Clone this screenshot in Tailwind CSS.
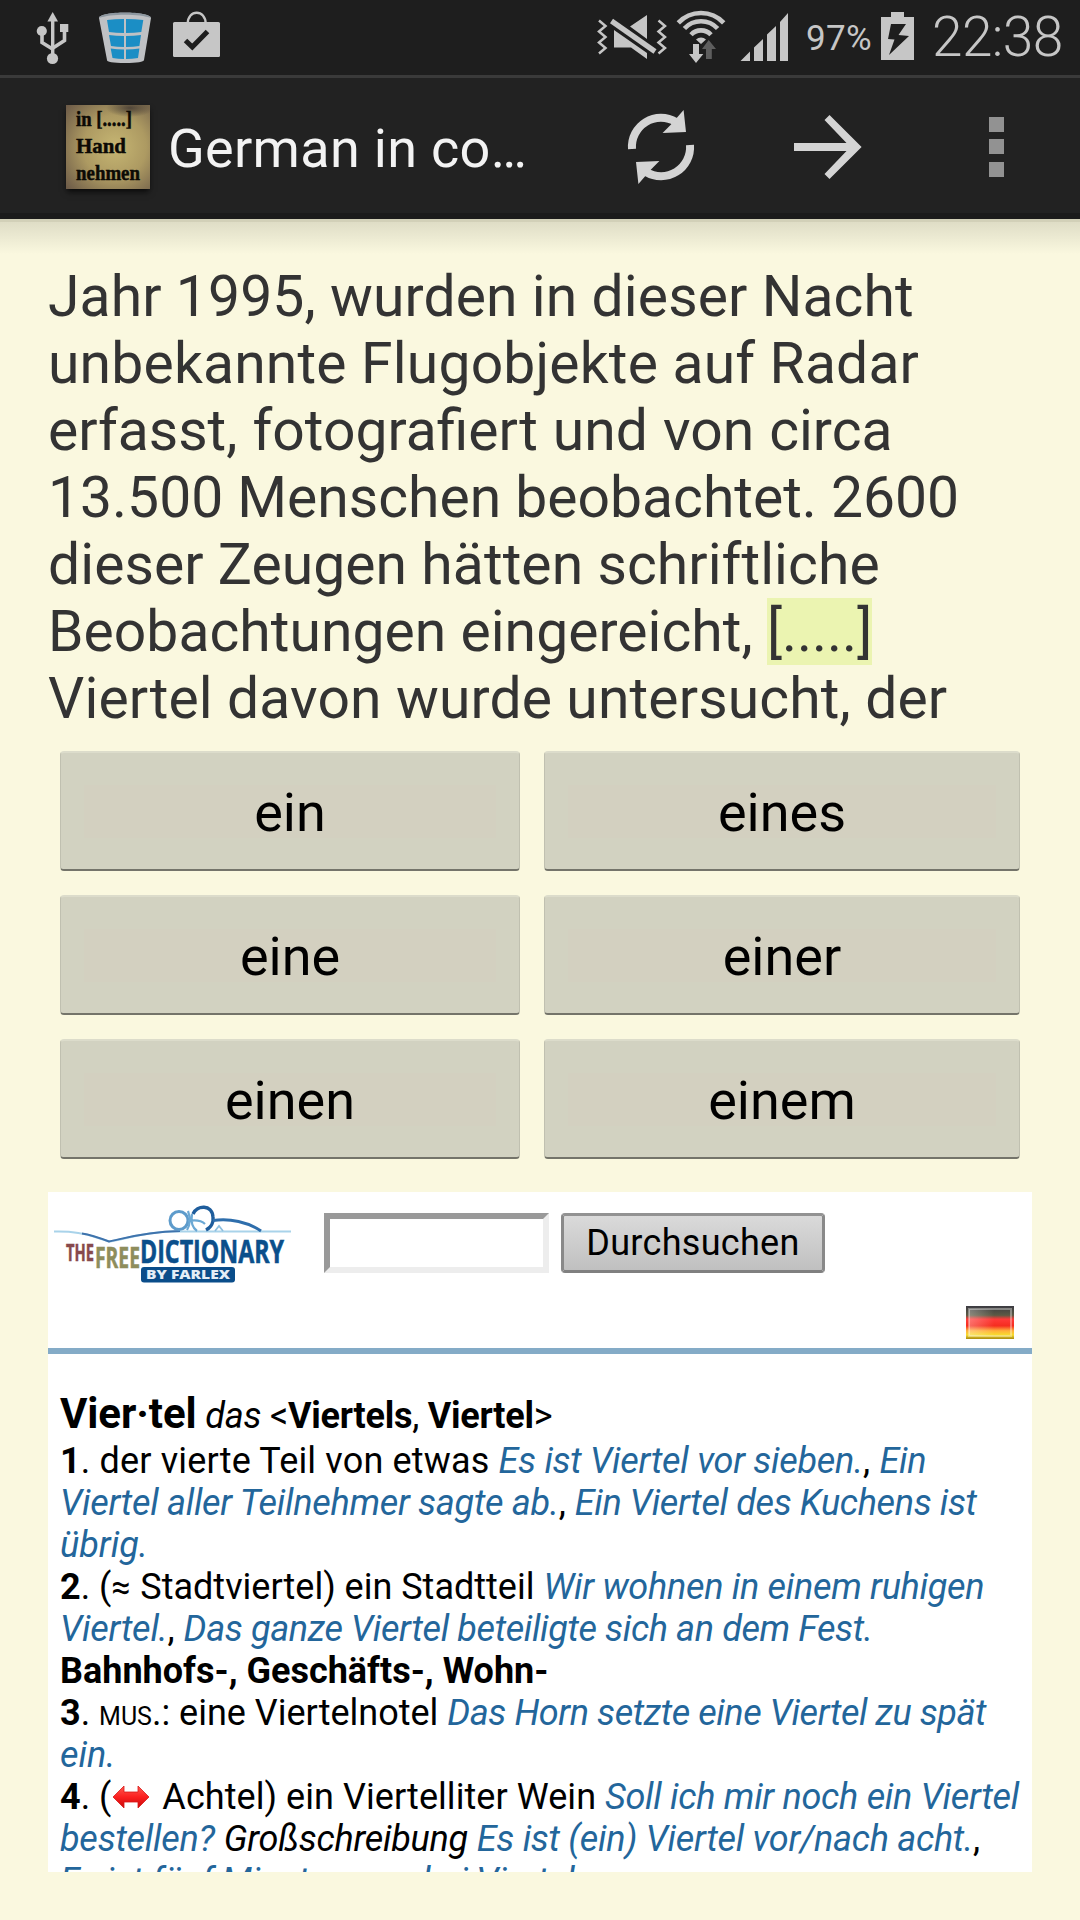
<!DOCTYPE html>
<html lang="de">
<head>
<meta charset="utf-8">
<title>German in context</title>
<script src="https://cdn.jsdelivr.net/npm/@tailwindcss/browser@4"></script>
</head>
<body class="bg-[#faf8df]">
<div class="flex h-[1920px] w-[1080px] flex-col overflow-hidden bg-[#faf8df] font-[Roboto,sans-serif]">

  <!-- Status bar -->
  <div class="flex h-[78px] shrink-0 border-b-3 border-[#3a3a3a] bg-[#1e1e1e] pl-[35px] text-[#c6c6c6]">
    <svg class="h-[75px] w-[37px]" viewBox="35 0 37 75" fill="#c6c6c6">
      <path d="M52.7 12 58 21.5H47.4z"/><path d="M51 20h3.4v36H51z"/><circle cx="52.5" cy="58.5" r="5.6"/><circle cx="41.8" cy="31" r="5.1"/><path d="M60 24h8.3v8H60z"/>
      <path d="M42 34v8.500l10.500 6.500M64.500 31v9.500L53 48" fill="none" stroke="#c6c6c6" stroke-width="3.600"/>
    </svg>
    <svg class="ml-[26px] h-[75px] w-[54px]" viewBox="98 0 54 75">
      <path d="M99 18C99 11 151 11 151 18L144 60Q143.500 63 125 63T107 60z" fill="#bfc1c4"/>
      <path d="M99 18C99 10.500 151 10.500 151 18 140 13.500 110 13.500 99 18z" fill="#8d979f"/>
      <path d="M107 20q8-1 17-1v14q-8 0-15-1zM126 19q9 0 17.300 1l-2 12q-7 1-15.300 1zM109 35q7 1 15 1v11q-7 0-13-1zM126 36q8 0 15-1l-1.600 11q-6 1-13.400 1zM110.700 48.500q6 1 13.300 1V59q-6 0-11.500-1zM126 49.500q7 0 13.400-1L138 58q-6 1-12 1z" fill="#1b8ec5"/>
    </svg>
    <svg class="ml-[20px] h-[75px] w-[50px]" viewBox="172 0 50 75">
      <path d="M187.700 24c0-15 18-15 18 0" fill="none" stroke="#c6c6c6" stroke-width="2.400"/>
      <rect x="173" y="22" width="47" height="35" rx="1.500" fill="#c6c6c6"/>
      <path d="M185.500 40.500 192.300 47 207.500 31.500" fill="none" stroke="#1e1e1e" stroke-width="5"/>
    </svg>
    <svg class="ml-[374px] h-[75px] w-[74px]" viewBox="596 0 74 75" fill="#c6c6c6">
      <path d="M599 20.500 605.500 26 599 31.500 605.500 37 599 42.500 605.500 48 599 53.500M658.500 20.500 665 26 658.500 31.500 665 37 658.500 42.500 665 48 658.500 53.500" fill="none" stroke="#c6c6c6" stroke-width="2.500"/>
      <path d="M630 26.500 647 15V39zM614 30V47.500H631L647 59V53z"/>
      <path d="M611.500 21 655 51.500" stroke="#c6c6c6" stroke-width="5.200"/>
    </svg>
    <svg class="ml-[5px] h-[75px] w-[53px]" viewBox="675 0 53 75" fill="#c6c6c6">
      <path d="M678.300 22.900a31 31 0 0 1 45.400 0M684.400 28.500a22.700 22.700 0 0 1 33.200 0M691 34.700a13.700 13.700 0 0 1 20 0" fill="none" stroke="#c6c6c6" stroke-width="4.600"/>
      <path d="M696 39.500a7.500 7.500 0 0 1 10 0L701 44zM693 44h6v10h4.300L696 63l-7-9h4z"/>
      <path d="M708.700 40 716 49h-4.200v10H706V49h-4z" fill="#5e5e5e"/>
    </svg>
    <svg class="ml-[11px] h-[75px] w-[51px]" viewBox="739 0 51 75" fill="#c6c6c6">
      <path d="M740.500 61 750 51.500V61zM754 61V47.500L763 39V61zM767 61V34.500L776 26V61zM780 61V22L788 13V61z"/>
    </svg>
    <span class="ml-[16px] w-[68px] text-[35px] leading-[77px] tracking-[0.3px]">97%</span>
    <svg class="ml-[5px] h-[75px] w-[36px]" viewBox="879 0 36 75" fill="#c6c6c6">
      <path d="M881 17h10v-5h13v5h10v43H881z"/>
      <path d="M891 24h15l-7.500 11 10.500 1-20 19 5.500-15.500L888 39z" fill="#1e1e1e"/>
    </svg>
    <span class="ml-[17px] text-[55px] font-light leading-[75px] tracking-[-0.6px]">22:38</span>
  </div>

  <!-- Action bar -->
  <div class="flex h-[141px] shrink-0 border-b-6 border-[#1b1b1b] bg-[#222] pl-[66px] text-[#f3f3f3]">
    <svg class="mt-[27px] h-[84px] w-[84px] shadow-md shadow-black/60" viewBox="66 105 84 84">
      <defs>
        <radialGradient id="parch" cx=".58" cy=".5" r=".75"><stop offset="0" stop-color="#c6b673"/><stop offset=".5" stop-color="#ad9a62"/><stop offset="1" stop-color="#6d5b48"/></radialGradient>
        <radialGradient id="stain"><stop offset="0" stop-color="#3e3530" stop-opacity=".8"/><stop offset="1" stop-color="#3e3530" stop-opacity="0"/></radialGradient>
      </defs>
      <rect x="66" y="105" width="84" height="84" fill="url(#parch)"/>
      <ellipse cx="130" cy="108" rx="24" ry="9" fill="url(#stain)"/>
      <g font-family="Liberation Serif, serif" font-weight="700" fill="#0c0a05" stroke="#0c0a05" stroke-width=".5" font-size="22">
        <text x="76" y="126" textLength="56" lengthAdjust="spacingAndGlyphs">in [.....]</text>
        <text x="76" y="153" textLength="50" lengthAdjust="spacingAndGlyphs">Hand</text>
        <text x="76" y="179.500" textLength="64" lengthAdjust="spacingAndGlyphs">nehmen</text>
      </g>
    </svg>
    <h1 class="ml-[18px] w-[370px] text-[54px] leading-[142px] tracking-[0.3px] whitespace-nowrap">German in co…</h1>
    <svg class="ml-[84px] h-[135px] w-[78px]" viewBox="622 78 78 135">
      <g id="half"><path d="M632 149A29 29 0 0 1 676 122" fill="none" stroke="#d4d4d4" stroke-width="8"/><path d="M683.600 110 686 132 662.600 133 671 124.500z" fill="#d4d4d4"/></g>
      <use href="#half" transform="rotate(180 661 147)"/>
    </svg>
    <svg class="ml-[90px] h-[135px] w-[76px]" viewBox="790 78 76 135">
      <path d="M829.500 115 861.600 147 829.500 179 824.500 174 846.500 151H794V143H846.500L824.500 120z" fill="#d4d4d4"/>
    </svg>
    <svg class="ml-[114px] h-[135px] w-[35px]" viewBox="980 78 35 135" fill="#929292">
      <path d="M989 117h15v15h-15zM989 139h15v15h-15zM989 162h15v15h-15z"/>
    </svg>
  </div>
  <div class="h-[3px] shrink-0 bg-[#d2d0b8]"></div>
  <div class="h-[32px] shrink-0 bg-linear-to-b from-[#dfddc6] to-[#faf8df]"></div>

  <!-- Sentence -->
  <p class="mt-[9px] h-[469px] shrink-0 pl-[48px] text-[57px] leading-[67px] whitespace-nowrap text-[#333]"><span class="tracking-[0.11px]">Jahr 1995, wurden in dieser Nacht</span><br><span class="tracking-[0.19px]">unbekannte Flugobjekte auf Radar</span><br><span class="[word-spacing:0.9px]">erfasst, fotografiert und von circa</span><br>13.500 Menschen beobachtet. 2600<br><span class="tracking-[0.07px]">dieser Zeugen hätten schriftliche</span><br><span class="tracking-[0.04px]">Beobachtungen eingereicht, </span><span class="bg-[#ebf4b1]">[.....]</span><br><span class="tracking-[0.14px]">Viertel davon wurde untersucht, der</span></p>

  <!-- Answers -->
  <div class="mx-[60px] mt-[19px] grid shrink-0 grid-cols-[460px_476px] gap-6 text-[54px] leading-[60px] text-black">
    <button class="h-[120px] rounded-[4px] border-x border-t-2 border-b-2 border-x-[#c0c0b0] border-t-[#dcdccb] border-b-[#74746a] bg-[#d2d2c1] px-[23px]"><span class="flex h-[53px] items-center justify-center bg-[#d3d0c0] pt-[4px]">ein</span></button>
    <button class="h-[120px] rounded-[4px] border-x border-t-2 border-b-2 border-x-[#c0c0b0] border-t-[#dcdccb] border-b-[#74746a] bg-[#d2d2c1] px-[23px]"><span class="flex h-[53px] items-center justify-center bg-[#d3d0c0] pt-[4px]">eines</span></button>
    <button class="h-[120px] rounded-[4px] border-x border-t-2 border-b-2 border-x-[#c0c0b0] border-t-[#dcdccb] border-b-[#74746a] bg-[#d2d2c1] px-[23px]"><span class="flex h-[53px] items-center justify-center bg-[#d3d0c0] pt-[4px]">eine</span></button>
    <button class="h-[120px] rounded-[4px] border-x border-t-2 border-b-2 border-x-[#c0c0b0] border-t-[#dcdccb] border-b-[#74746a] bg-[#d2d2c1] px-[23px]"><span class="flex h-[53px] items-center justify-center bg-[#d3d0c0] pt-[4px]">einer</span></button>
    <button class="h-[120px] rounded-[4px] border-x border-t-2 border-b-2 border-x-[#c0c0b0] border-t-[#dcdccb] border-b-[#74746a] bg-[#d2d2c1] px-[23px]"><span class="flex h-[53px] items-center justify-center bg-[#d3d0c0] pt-[4px]">einen</span></button>
    <button class="h-[120px] rounded-[4px] border-x border-t-2 border-b-2 border-x-[#c0c0b0] border-t-[#dcdccb] border-b-[#74746a] bg-[#d2d2c1] px-[23px]"><span class="flex h-[53px] items-center justify-center bg-[#d3d0c0] pt-[4px]">einem</span></button>
  </div>

  <!-- Dictionary -->
  <div class="mx-[48px] mt-[33px] h-[680px] shrink-0 overflow-hidden bg-white text-[36px] leading-[42px] text-black">
    <div class="flex h-[162px] border-b-6 border-[#84abc7]">
      <svg class="ml-[4px] h-[100px] w-[242px]" viewBox="52 1192 242 100">
        <g fill="none">
          <path d="M54 1231.500C72 1231 84 1233 95 1237L109 1241.500C122 1240 142 1232 172 1231.500H291" stroke="#a9d3ea" stroke-width="2"/>
          <path d="M82 1233.500Q92 1235 109 1241.500C122 1239 142 1232 180 1231" stroke="#3f73ac" stroke-width="2"/>
          <circle cx="179" cy="1220.500" r="9" stroke="#5d9bcb" stroke-width="3"/>
          <path d="M193 1214C197 1205 212 1204 213 1217 214 1225 208 1229 206 1230" stroke="#1e5d9c" stroke-width="3.400"/>
          <path d="M188 1211Q192 1222 187 1230M188 1221Q200 1219 205 1224M192 1214Q190 1226 197 1231" stroke="#6ba8d4" stroke-width="2.200"/>
          <path d="M213 1220.500C230 1218 248 1222 261 1231" stroke="#2e6eac" stroke-width="3"/>
          <path d="M215 1231 219 1226 223 1231" stroke="#8dbfe0" stroke-width="1.800"/>
        </g>
        <g font-family="Open Sans, sans-serif" font-weight="700">
          <text x="66" y="1261" font-size="24" fill="#87494c" stroke="#87494c" stroke-width=".5" textLength="28" lengthAdjust="spacingAndGlyphs">THE</text>
          <text x="95" y="1268" font-size="28" fill="#8e8d5c" stroke="#8e8d5c" stroke-width=".5" textLength="45" lengthAdjust="spacingAndGlyphs">FREE</text>
          <text x="140" y="1262.700" font-size="33" fill="#0b4f8b" stroke="#0b4f8b" stroke-width=".6" textLength="144" lengthAdjust="spacingAndGlyphs">DICTIONARY</text>
          <rect x="141" y="1267" width="94" height="15.500" rx="3" fill="#0a4d8a"/>
          <text x="146" y="1279.300" font-size="12.500" font-weight="800" fill="#e4eef6" textLength="84" lengthAdjust="spacingAndGlyphs">BY FARLEX</text>
        </g>
      </svg>
      <div class="mt-[21px] ml-[30px] h-[60px] w-[225px] border-6 border-t-[#999] border-r-[#ededed] border-b-[#ededed] border-l-[#999] bg-white"></div>
      <button class="mt-[21px] ml-[12px] h-[60px] w-[264px] rounded-[4px] border-3 border-t-[#929292] border-x-[#898989] border-b-[#808080] bg-linear-to-b from-[#dadada] to-[#c0c0c0] tracking-[0.3px]">Durchsuchen</button>
      <svg class="mt-[114px] ml-[141px] h-[33px] w-[48px]" viewBox="0 0 48 33">
        <defs><linearGradient id="flag" x2="0" y2="1"><stop offset="0" stop-color="#3c3b42"/><stop offset=".28" stop-color="#5c5a44"/><stop offset=".4" stop-color="#ff3a38"/><stop offset=".6" stop-color="#f52d20"/><stop offset=".75" stop-color="#ffb03a"/><stop offset=".88" stop-color="#f8dc2c"/><stop offset="1" stop-color="#a98a10"/></linearGradient>
        <linearGradient id="shine"><stop offset="0" stop-color="#fff" stop-opacity=".3"/><stop offset=".6" stop-color="#fff" stop-opacity="0"/></linearGradient></defs>
        <path d="M0 0h48v33H0z" fill="url(#flag)"/>
        <path d="M3 3h42v27H3z" fill="url(#shine)" stroke="#fff" stroke-opacity=".35" stroke-width="2"/>
      </svg>
    </div>
    <div class="pt-[35px] pl-[12px] whitespace-nowrap">
      <div class="h-[51px] leading-[49px] tracking-[-0.24px]"><b class="text-[42px] tracking-[-0.1px]">Vier·tel</b> <i>das</i> &lt;<b>Viertels</b>, <b>Viertel</b>&gt;</div>
      <div class="h-[42px] tracking-[0.16px]"><b>1</b>. der vierte Teil von etwas <i class="tracking-[-0.27px] text-[#23669b]">Es ist Viertel vor sieben.</i>, <i class="tracking-[-0.27px] text-[#23669b]">Ein</i></div>
      <div class="h-[42px]"><i class="tracking-[-0.28px] text-[#23669b]">Viertel aller Teilnehmer sagte ab.</i>, <i class="tracking-[-0.36px] text-[#23669b]">Ein Viertel des Kuchens ist</i></div>
      <div class="h-[42px]"><i class="text-[#23669b]">übrig.</i></div>
      <div class="h-[42px]"><b>2</b>. (<span class="inline-block h-[42px] w-[20px] align-top text-[34px]">≈</span> Stadtviertel) ein Stadtteil <i class="tracking-[-0.28px] text-[#23669b]">Wir wohnen in einem ruhigen</i></div>
      <div class="h-[42px]"><i class="tracking-[-0.25px] text-[#23669b]">Viertel.</i>, <i class="tracking-[-0.37px] text-[#23669b]">Das ganze Viertel beteiligte sich an dem Fest.</i></div>
      <div class="h-[42px]"><b>Bahnhofs-, Geschäfts-, Wohn-</b></div>
      <div class="h-[42px]"><b>3</b>. <span class="text-[25px] leading-none">MUS</span>.: eine Viertelnotel <i class="tracking-[-0.42px] text-[#23669b]">Das Horn setzte eine Viertel zu spät</i></div>
      <div class="h-[42px]"><i class="text-[#23669b]">ein.</i></div>
      <div class="h-[42px]"><b>4</b>. (<svg class="mt-[9px] mr-[3px] ml-px inline-block h-[24px] w-[38px] align-top" viewBox="0 0 38 24"><defs><linearGradient id="red" x2="0" y2="1"><stop offset="0" stop-color="#ff5a50"/><stop offset=".5" stop-color="#fb2020"/><stop offset="1" stop-color="#c80a0a"/></linearGradient></defs><path d="M1 12 12 1V7H26V1L37 12 26 23V17H12V23z" fill="url(#red)" stroke="#d81818" stroke-width=".8"/></svg> <span class="tracking-[0.06px]">Achtel) ein Viertelliter Wein</span> <i class="tracking-[-0.28px] text-[#23669b]">Soll ich mir noch ein Viertel</i></div>
      <div class="h-[42px]"><i class="tracking-[-0.25px] text-[#23669b]">bestellen?</i> <i class="tracking-[-0.26px]">Großschreibung</i> <i class="tracking-[-0.3px] text-[#23669b]">Es ist (ein) Viertel vor/nach acht.</i>,</div>
      <div class="h-[42px]"><i class="tracking-[-0.3px] text-[#23669b]">Es ist fünf Minuten vor drei Viertel.</i></div>
    </div>
  </div>
</div>
</body>
</html>
